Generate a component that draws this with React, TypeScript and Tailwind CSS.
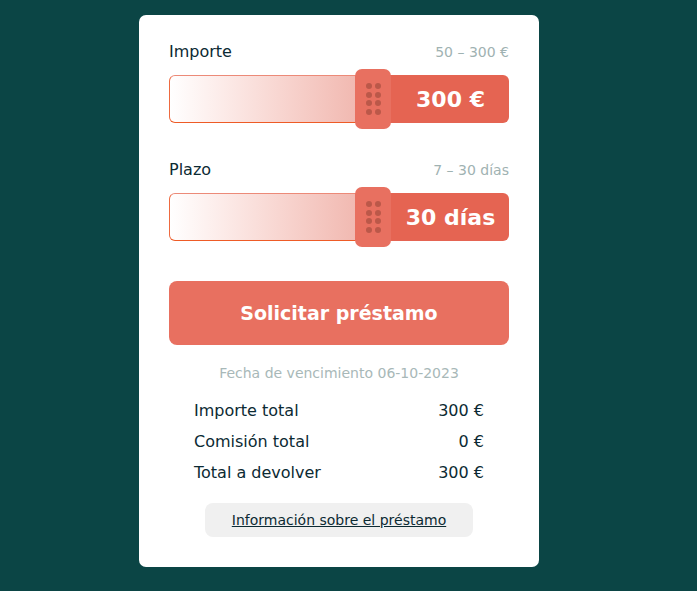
import React from 'react';

const Grip: React.FC = () => (
    <div className="grid grid-cols-2 gap-x-[3px] gap-y-[2.5px]">
        {[0, 1, 2, 3, 4, 5, 6, 7].map((i) => (
            <span key={i} className="w-[6px] h-[6px] rounded-full bg-[#bb5849]" />
        ))}
    </div>
);

const Slider: React.FC<{ label: string; range: string; value: string }> = ({ label, range, value }) => (
    <div>
        <div className="flex items-center justify-between h-[20px]">
            <span className="text-[16px] text-[#0c2a33]">{label}</span>
            <span className="text-[14px] text-[#9fb2b2]">{range}</span>
        </div>
        <div className="mt-[7px] flex items-center h-[60px]">
            <div className="flex-1 h-[48px] rounded-l-[6px] border border-r-0 border-[#ec8a78] border-b-[#ee5b26] border-l-[#ee6a40] bg-gradient-to-r from-white to-[#f1b9b1]" />
            <div className="w-[36px] h-[60px] -mx-[1px] z-10 rounded-[7px] bg-[#e87060] flex items-center justify-center">
                <Grip />
            </div>
            <div className="w-[119px] h-[48px] rounded-r-[6px] bg-[#e56452] flex items-center justify-center text-white text-[22px] font-bold pl-[2px]">
                {value}
            </div>
        </div>
    </div>
);

const App: React.FC = () => {
    return (
        <div className="min-h-screen bg-[#0b4545] flex justify-center pt-[15px] pr-[19px]" style={{ fontFamily: '"DejaVu Sans", "Liberation Sans", sans-serif' }}>
            <div className="w-[400px] h-[552px] bg-white rounded-[7px] px-[30px] pt-[27px]">
                <Slider label="Importe" range="50 – 300 €" value="300 €" />
                <div className="mt-[31px]">
                    <Slider label="Plazo" range="7 – 30 días" value="30 días" />
                </div>
                <button className="mt-[34px] w-full h-[64px] rounded-[8px] bg-[#e87060] text-white text-[19px] font-bold">
                    Solicitar préstamo
                </button>
                <p className="mt-[18px] h-[20px] leading-[20px] text-center text-[14px] text-[#a8b8b8]">Fecha de vencimiento 06-10-2023</p>
                <div className="mt-[17px] px-[25px] flex flex-col gap-[9px] text-[16px] text-[#0c2a33]">
                    <div className="flex justify-between h-[22px] items-center">
                        <span>Importe total</span>
                        <span>300 €</span>
                    </div>
                    <div className="flex justify-between h-[22px] items-center">
                        <span>Comisión total</span>
                        <span>0 €</span>
                    </div>
                    <div className="flex justify-between h-[22px] items-center">
                        <span>Total a devolver</span>
                        <span>300 €</span>
                    </div>
                </div>
                <div className="mt-[19px] flex justify-center">
                    <a href="#" className="w-[268px] h-[34px] rounded-[8px] bg-[#f0f0f0] flex items-center justify-center text-[14px] text-[#0c2a33] underline">
                        Información sobre el préstamo
                    </a>
                </div>
            </div>
        </div>
    );
};

export default App;
